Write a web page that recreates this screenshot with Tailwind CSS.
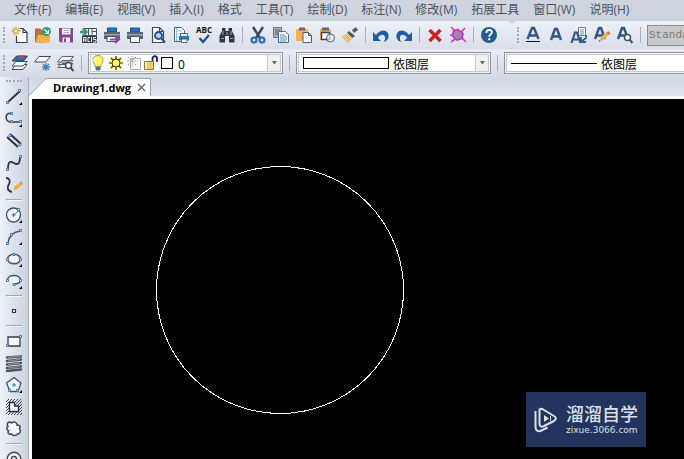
<!DOCTYPE html>
<html lang="zh-CN">
<head>
<meta charset="utf-8">
<meta name="viewport" content="width=device-width, initial-scale=1">
<title>Drawing1.dwg</title>
<script src="https://cdn.jsdelivr.net/npm/@tailwindcss/browser@4"></script>
</head>
<body class="flex h-screen flex-col overflow-hidden bg-[#d3d9e5] text-xs text-black font-['Open_Sans','Noto_Sans_CJK_SC',sans-serif]">

<!-- Menu bar -->
<nav aria-label="菜单" class="flex shrink-0 gap-3.5 overflow-hidden whitespace-nowrap bg-[#cfd4df] px-3.5 pt-0.5 pb-[3px] leading-4 text-[#4b505c]">
  <button>文件(F)</button><button>编辑(E)</button><button>视图(V)</button><button>插入(I)</button><button>格式</button><button>工具(T)</button><button>绘制(D)</button><button>标注(N)</button><button>修改(M)</button><button>拓展工具</button><button>窗口(W)</button><button>说明(H)</button>
</nav>

<!-- Standard toolbar -->
<div class="flex h-7 shrink-0 overflow-hidden bg-[#d3d9e4]">
  <div role="toolbar" aria-label="标准" class="flex w-[512px] shrink-0 items-center gap-[5px] rounded-r-md bg-linear-to-b from-[#eef1f7] to-[#d9deea] pl-[3px]">
    <span class="mr-px h-4 w-0 border-l-2 border-dotted border-[#a3a8b3]"></span>
    <button aria-label="新建"><svg class="size-[18px]" viewBox="0 0 18 18"><path d="M5 7v10h11V6l-3.500-3.500H8" fill="#fff"/><path d="M5.500 10v6.500h10.500V6.500l-4-4H9M12 2.500v4h4" fill="none" stroke="#333b4c" stroke-width="1.200"/><path d="M5 0.500v9M0.500 5h9M2 2l6 6M8 2L2 8" stroke="#d9a04a" stroke-width="1.300"/><circle cx="5" cy="5" r="1.500" fill="#fff3c8"/></svg></button>
    <button aria-label="打开"><svg class="size-[18px]" viewBox="0 0 18 18"><path d="M1.500 3h5l1 2h5v11h-11z" fill="#b9783a" stroke="#a5672c"/><path d="M1.500 16.500L4 9h12v7.500z" fill="#f7b04a"/><circle cx="12.500" cy="5.500" r="4.500" fill="#31a068"/><path d="M10.500 3.500l4 4M14.500 4v3.500H11" stroke="#fff" stroke-width="1.200" fill="none"/></svg></button>
    <button aria-label="保存"><svg class="size-[18px]" viewBox="0 0 18 18"><path d="M2 2h14v14.500H3.500L2 15z" fill="#80488f"/><path d="M5 2.500h8.500v6H5zM5.500 11.500h7.500v5H5.500z" fill="#f7f3fa"/><path d="M6.500 4.500h5.500M6.500 6.500h5.500" stroke="#bca5c8"/><path d="M7 12.500h2v3.500H7z" fill="#80488f"/></svg></button>
    <button aria-label="ACIS 输入"><svg class="size-[18px]" viewBox="0 0 18 18"><path d="M3 2.500h13.500v7H3zM8.500 2.500v7M12 5.500h5M12 2.500v7" fill="#f8fafb" stroke="#4a515c"/><path d="M0 6h6M4 3l3 3-3 3" fill="none" stroke="#35976b" stroke-width="1.800"/><path d="M2 10h15v7H2z" fill="#343b46"/><path d="M3.500 16v-4.500h2.500V16M3.500 14h2.500M10 11.500H8v4h2M11.500 11v5M16 11.500h-2.500v2H16v2.500h-3" fill="none" stroke="#fff" stroke-width=".9"/></svg></button>
    <button aria-label="发布"><svg class="size-[18px]" viewBox="0 0 18 18"><path d="M4.500 2h9v4h-9z" fill="#2677b9" stroke="#214e7c"/><path d="M1 6h16v7H1z" fill="#596675"/><path d="M1 8h16v1.500H1z" fill="#92a3b5"/><path d="M4 10.500h9v5H4z" fill="#fff" stroke="#465060"/><path d="M7 13.500h8M12 10l4 3.500-4 3.500" fill="none" stroke="#9544a9" stroke-width="2"/></svg></button>
    <button aria-label="打印"><svg class="size-[18px]" viewBox="0 0 18 18"><path d="M4.500 2h9v4h-9z" fill="#2677b9" stroke="#214e7c"/><path d="M1 6h16v7H1z" fill="#596675"/><path d="M1 8h16v1.500H1z" fill="#92a3b5"/><path d="M4.500 10.500h9v6h-9z" fill="#fff" stroke="#465060"/></svg></button>
    <button aria-label="打印预览"><svg class="size-[18px]" viewBox="0 0 18 18"><path d="M3.500 1.500h7l4 4v11h-11zM10.500 1.500v4h4" fill="#fff" stroke="#424b5d" stroke-width="1.200"/><circle cx="9.500" cy="9.500" r="3.500" fill="#b5d1ed" stroke="#1c4a8d" stroke-width="1.800"/><path d="M12 12l4 4.500" stroke="#1c4a8d" stroke-width="2"/></svg></button>
    <button aria-label="页面设置"><svg class="size-[18px]" viewBox="0 0 18 18"><path d="M2.500 1.500h7l3 3v11h-10z" fill="#fff" stroke="#4c6077"/><path d="M4.500 2v13M5 5h5M5 8h3M5 11h3" stroke="#8fc3dd"/><path d="M8.500 7.500h7v3h-7z" fill="#fff" stroke="#51647a"/><path d="M7 10h10v4.500H7z" fill="#2677b9"/><path d="M9.500 13h5.500v3.500H9.500z" fill="#fff" stroke="#51647a"/></svg></button>
    <button aria-label="拼写检查"><svg class="size-[18px] overflow-visible" viewBox="0 0 18 18"><text x="9" y="7" font-size="8" font-weight="700" text-anchor="middle" fill="#111">ABC</text><path d="M4.500 12l3.500 4 6-7" fill="none" stroke="#204b99" stroke-width="2.300"/></svg></button>
    <button aria-label="查找"><svg class="size-[18px]" viewBox="0 0 18 18"><path d="M4 2h3.500v3h3V2H14v3l2.500 5v6.500H11V10H7v6.500H1.500V10L4 5z" fill="#303640"/><path d="M5 5v4M13 5v4M3 12.500h3M12 12.500h3M9 6v3" stroke="#a0a8b2"/></svg></button>
    <span class="mx-px h-4 w-px bg-[#a9aeba]"></span>
    <button aria-label="剪切"><svg class="size-[18px]" viewBox="0 0 18 18"><path d="M4 1l7 11M14 1L7 12" stroke="#3d4756" stroke-width="2.400"/><circle cx="5" cy="14" r="2.500" fill="none" stroke="#236ab0" stroke-width="2"/><circle cx="13" cy="14" r="2.500" fill="none" stroke="#236ab0" stroke-width="2"/></svg></button>
    <button aria-label="复制"><svg class="size-[18px]" viewBox="0 0 18 18"><path d="M1.500 1.500h8v10h-8z" fill="#aab3bd" stroke="#697482"/><path d="M3 4h5M3 6h5M3 8h5" stroke="#55606d"/><path d="M6.500 5.500h7l3 3v8h-10z" fill="#fff" stroke="#4b6783"/><path d="M8 9h5M8 11h7M8 13h7M8 15h6" stroke="#4d88b5"/></svg></button>
    <button aria-label="粘贴"><svg class="size-[18px]" viewBox="0 0 18 18"><path d="M1 3h12v12H1z" fill="#f2b253"/><path d="M4 1.500h6v3H4z" fill="#626b78"/><path d="M8 6.500h5.500l3 3v7H8zM13.500 6.500v3h3" fill="#fff" stroke="#525b68"/></svg></button>
    <button aria-label="选择性粘贴"><svg class="size-[18px]" viewBox="0 0 18 18"><path d="M2 3h11v11H2z" fill="#f2b253"/><path d="M4 1.500h7v3H4z" fill="#626b78"/><path d="M3.500 6.500h8v7h-8z" fill="#fff" stroke="#384452" stroke-width="1.400"/><circle cx="12.500" cy="12" r="4" fill="#ddecf7" fill-opacity=".7" stroke="#456582"/></svg></button>
    <button aria-label="特性匹配"><svg class="size-[18px]" viewBox="0 0 18 18"><path d="M12 5.500l4-3" stroke="#545d69" stroke-width="3.500"/><path d="M8 5l6 5-2.500 2L6 7z" fill="#4d5866"/><path d="M6 7l5.500 5L7 17l-6-6z" fill="#eab467"/><path d="M3 10l5 5M5 8l5 5" stroke="#f8d9a6"/></svg></button>
    <span class="mx-px h-4 w-px bg-[#a9aeba]"></span>
    <button aria-label="放弃"><svg class="size-[18px]" viewBox="0 0 18 18"><path d="M1 6v9h8l-3-3c1-3 6-5 7-1 .5 2-.5 4-1.500 5 4-1 5.500-4 5-7C15.500 3 8 3 4 9z" fill="#1f5ca5"/></svg></button>
    <button aria-label="重做"><svg class="size-[18px]" viewBox="0 0 18 18"><path d="M17 6v9H9l3-3c-1-3-6-5-7-1-.5 2 .5 4 1.500 5-4-1-5.500-4-5-7C2.500 3 10 3 14 9z" fill="#1f5ca5"/></svg></button>
    <span class="mx-px h-4 w-px bg-[#a9aeba]"></span>
    <button aria-label="删除"><svg class="size-[18px]" viewBox="0 0 18 18"><path d="M3.500 4l11 11M14.500 4l-11 11" stroke="#c6231b" stroke-width="3.500"/></svg></button>
    <button aria-label="分解"><svg class="size-[18px]" viewBox="0 0 18 18"><path d="M2 1l4 4M16 2l-4 4M2 16l4-3M13 12l4 4M1 9h2" stroke="#bf3cc8" stroke-width="1.600"/><path d="M9 3.500l5 4-1 5-5 1.500-4.500-4 1-5z" fill="#a883ac" stroke="#c02fc8" stroke-width="1.600"/></svg></button>
    <span class="mx-px h-4 w-px bg-[#a9aeba]"></span>
    <button aria-label="帮助"><svg class="size-[18px]" viewBox="0 0 18 18"><circle cx="9" cy="9" r="8" fill="#235e91"/><path d="M6.300 7c0-4 5.600-3.800 5.600-.8 0 2-2.700 2-2.700 4.600" fill="none" stroke="#fff" stroke-width="1.900"/><path d="M8.200 12.200h2v2h-2z" fill="#fff"/></svg></button>
  </div>
  <div role="toolbar" aria-label="文字" class="flex min-w-0 flex-1 items-center gap-[5px] rounded-l-md bg-linear-to-b from-[#eef1f7] to-[#d9deea] pl-[5px]">
    <span class="h-4 w-0 shrink-0 border-l-2 border-dotted border-[#a3a8b3]"></span>
    <button class="shrink-0" aria-label="多行文字"><svg class="size-[18px] overflow-visible" viewBox="0 0 18 18"><path d="M3.500 13L8 2h2l4.500 11M5.500 9.500h7" fill="none" stroke="#315684" stroke-width="2.400"/><path d="M2 15.500h14" stroke="#111"/></svg></button>
    <button class="shrink-0" aria-label="单行文字"><svg class="size-[18px] overflow-visible" viewBox="0 0 18 18"><path d="M4 14L8 3h2l4 11M5.500 10.500h7" fill="none" stroke="#315684" stroke-width="2.400"/></svg></button>
    <button class="shrink-0" aria-label="文字样式"><svg class="size-[18px] overflow-visible" viewBox="0 0 18 18"><path d="M8.500 1.500h7v8h-7z" fill="#fff" stroke="#737b86"/><path d="M10 4h4M10 6h4M10 8h4" stroke="#7d8791"/><path d="M1.500 17L5 6.500h2L10.500 17M3 13.500h6" fill="none" stroke="#315684" stroke-width="2.200"/><path d="M16 9v3l-4 3M11 11v5h5" stroke="#2e6392" stroke-width="1.800" fill="none"/></svg></button>
    <button class="shrink-0" aria-label="编辑文字"><svg class="size-[18px] overflow-visible" viewBox="0 0 18 18"><path d="M2 13L6 2h2l4 11M3.500 9.500h7" fill="none" stroke="#315684" stroke-width="2.400"/><path d="M6.500 15l1.500-4 6-5.500 2.500 2.500-6 6z" fill="#efb052"/><path d="M13.500 7l2-2 2 2.500-1.500 1.500z" fill="#dc7656"/><path d="M5.500 16l1-2 1 1z" fill="#444"/></svg></button>
    <button class="shrink-0" aria-label="查找文字"><svg class="size-[18px] overflow-visible" viewBox="0 0 18 18"><path d="M2 13L6 2h2l4 11M3.500 9.500h7" fill="none" stroke="#315684" stroke-width="2.400"/><circle cx="11.500" cy="11.500" r="3" fill="#fff" stroke="#4a525f" stroke-width="1.500"/><path d="M13.500 13.500l3 3.500" stroke="#4a525f" stroke-width="2"/></svg></button>
    <span class="mx-px h-4 w-px shrink-0 bg-[#a9aeba]"></span>
    <select aria-label="文字样式" disabled class="h-[21px] w-40 shrink-0 appearance-none border border-[#888d96] bg-[#c9c9c9] pl-px text-[11px] leading-4 text-[#777] opacity-100 font-['Liberation_Mono','Noto_Sans_CJK_SC',monospace]"><option>Standard</option></select>
  </div>
</div>

<!-- Layer and property toolbar -->
<div role="toolbar" aria-label="图层" class="flex h-7 shrink-0 items-center gap-[5px] overflow-hidden bg-linear-to-b from-[#e9edf4] to-[#d5dae6] pl-[3px]">
  <span class="mr-px h-4 w-0 shrink-0 border-l-2 border-dotted border-[#a3a8b3]"></span>
  <button class="shrink-0" aria-label="图层特性"><svg class="size-[18px]" viewBox="0 0 18 18"><path d="M5 10.500h11l-4 5H1z" fill="#f6f7f9" stroke="#414955"/><path d="M5 7.500h11l-4 4.500H1z" fill="#f6f7f9" stroke="#414955"/><path d="M5.500 2H16.500l-4 5H1z" fill="#2771b2" stroke="#23466f"/><path d="M7 1.500h7l-2 3-4-.5z" fill="#d43b35"/></svg></button>
  <button class="shrink-0" aria-label="冻结图层"><svg class="size-[18px]" viewBox="0 0 18 18"><path d="M5 2.500h11.500l-5 5.500H0.500z" fill="#fafbfc" stroke="#454c57"/><path d="M12 9v8M8 13h8M9 10l6 6M15 10l-6 6" stroke="#4283bd" stroke-width="1.300"/></svg></button>
  <button class="shrink-0" aria-label="图层查询"><svg class="size-[18px]" viewBox="0 0 18 18"><path d="M5 9.500h11l-4 4H1zM5 6.500h11l-4 4H1zM5 2.500h11.500l-5 5.500H0.500z" fill="#f6f7f9" stroke="#5c636d"/><circle cx="11.500" cy="11.500" r="3" fill="#fff" stroke="#454c57" stroke-width="1.500"/><path d="M13.500 13.500l3 3.500" stroke="#454c57" stroke-width="2"/></svg></button>
  <span class="mx-px h-4 w-px shrink-0 bg-[#a9aeba]"></span>

  <div class="relative h-[22px] w-[195px] shrink-0 border border-[#90959e] bg-[#f2f3f5] p-px">
    <select aria-label="图层" class="h-full w-full appearance-none border border-[#c7c9ce] bg-white pt-0.5 pl-[87px] text-xs leading-4"><option>0</option></select>
    <div class="pointer-events-none absolute inset-y-0 left-0 flex items-center">
      <svg class="size-[18px]" viewBox="0 0 18 18"><path d="M9 1.500c-6 0-6 6-3 9v2h6v-2c3-3 3-9-3-9z" fill="#fff36d" stroke="#aa9b35"/><path d="M7 4c-2 1-2 3-1 4" stroke="#fff" fill="none" stroke-width="1.500"/><path d="M6.500 13h5v2.500l-1 1h-3l-1-1z" fill="#477795"/></svg>
      <svg class="size-[18px]" viewBox="0 0 18 18"><path d="M3 3h12v12H3z" fill="#fffaa0"/><path d="M9 2v14M2 9h14M4 4l10 10M14 4L4 14" stroke="#333200" stroke-width="1.200"/><circle cx="9" cy="9" r="4" fill="#fff65a" stroke="#333200"/></svg>
      <svg class="size-[18px]" viewBox="0 0 18 18"><path d="M5.500 4.500h10v11h-10z" fill="#fafafa" stroke="#aaa"/><path d="M7 2v11M2 7h11M3 3l8 8M11 3l-8 8" stroke="#999" stroke-dasharray="1.500 1"/></svg>
      <svg class="size-[18px]" viewBox="0 0 18 18"><path d="M9.500 8V4.500c0-3 4.500-3 4.500 0V8" fill="none" stroke="#24245a" stroke-width="1.800"/><path d="M1.500 7.500h9v8h-9z" fill="#eac96b" stroke="#8e7637"/><path d="M3 8v7" stroke="#fff1bb" stroke-width="2"/></svg>
      <span class="size-3 border border-black bg-white"></span>
    </div>
    <span class="pointer-events-none absolute inset-y-px right-px flex w-[14px] items-center justify-center border border-[#c7c9ce] bg-[#f1f1f1]"><svg class="h-1 w-[5px]" viewBox="0 0 5 4"><path d="M0 0h5L2.500 3.500z" fill="#626262"/></svg></span>
  </div>
  <span class="mx-px h-4 w-px shrink-0 bg-[#a9aeba]"></span>
  <div class="relative h-[22px] w-[195px] shrink-0 border border-[#90959e] bg-[#f2f3f5] p-px">
    <select aria-label="颜色" class="h-full w-full appearance-none border border-[#c7c9ce] bg-white pt-0.5 pl-[94px] text-xs leading-4"><option>依图层</option></select>
    <span class="pointer-events-none absolute inset-y-1 left-1.5 w-[86px] border border-black"></span>
    <span class="pointer-events-none absolute inset-y-px right-px flex w-[14px] items-center justify-center border border-[#c7c9ce] bg-[#f1f1f1]"><svg class="h-1 w-[5px]" viewBox="0 0 5 4"><path d="M0 0h5L2.500 3.500z" fill="#626262"/></svg></span>
  </div>
  <span class="mx-px h-4 w-px shrink-0 bg-[#a9aeba]"></span>
  <div class="relative h-[22px] w-[195px] shrink-0 border border-[#90959e] bg-[#f2f3f5] p-px">
    <select aria-label="线型" class="h-full w-full appearance-none border border-[#c7c9ce] bg-white pt-0.5 pl-[94px] text-xs leading-4"><option>依图层</option></select>
    <span class="pointer-events-none absolute top-2.5 left-1.5 h-px w-[86px] bg-black"></span>
  </div>
</div>

<div class="flex min-h-0 flex-1">
  <!-- Drawing tools -->
  <aside role="toolbar" aria-label="绘制" class="flex w-[29px] shrink-0 flex-col items-center gap-1 overflow-hidden border-r border-[#a9afbc] bg-linear-to-r from-[#edf1f7] to-[#ccd3e0] pt-[3px]">
    <span class="mb-0.5 h-0 w-4 shrink-0 border-t-2 border-dotted border-[#a3a8b3]"></span>
    <button class="shrink-0" aria-label="直线"><svg class="size-[18px]" viewBox="0 0 18 18"><path d="M3 14L15 3" stroke="#29303e" stroke-width="1.800"/><path d="M1.500 13.500h2v2h-2zM13.500 1.500h2v2h-2z" fill="#fff" stroke="#3b74a8"/><path d="M17 14v3h-3z"/></svg></button>
    <button class="shrink-0" aria-label="多段线"><svg class="size-[18px]" viewBox="0 0 18 18"><path d="M6 3C-1 3 0 12 6 12h9" fill="none" stroke="#39414f" stroke-width="1.600"/><path d="M5.500 2.500h2v2h-2zM5.500 10.500h2v2h-2zM14.500 10.500h2v2h-2z" fill="#fff" stroke="#3b74a8"/><path d="M17 14v3h-3z"/></svg></button>
    <button class="shrink-0" aria-label="多线"><svg class="size-[18px]" viewBox="0 0 18 18"><path d="M5 2l11 10M2 5l11 10" stroke="#29303e" stroke-width="2"/><path d="M4 2.500h2v2H4zM14 11.500h2v2h-2z" fill="#fff" stroke="#3b74a8"/></svg></button>
    <button class="shrink-0" aria-label="样条曲线"><svg class="size-[18px]" viewBox="0 0 18 18"><path d="M3 15C3 5 7 8 9 9c5 3 6-1 6-6" fill="none" stroke="#29303e" stroke-width="1.800"/><path d="M1.500 14.500h2v2h-2zM14.500 1.500h2v2h-2z" fill="#fff" stroke="#3b74a8"/></svg></button>
    <button class="shrink-0" aria-label="徒手画"><svg class="size-[18px]" viewBox="0 0 18 18"><path d="M1 2c3 0 5 3 3 6s-2 7 3 8" fill="none" stroke="#29303e" stroke-width="1.800"/><path d="M8 15l1-4 5-4 2 3-5 4z" fill="#f0ac42"/><path d="M14 6.500l2-1.500 2 3-2 1.500z" fill="#df9a56"/><path d="M6.500 16l2-4 2 2.500z" fill="#d8dbe0"/></svg></button>
    <span class="my-px h-0.5 w-4 shrink-0 border-t border-b border-t-[#a0a7b4] border-b-[#f3f5f9]"></span>
    <button class="shrink-0" aria-label="圆"><svg class="size-[18px]" viewBox="0 0 18 18"><circle cx="8.500" cy="9" r="7" fill="#eef4f9" stroke="#445063" stroke-width="1.300"/><path d="M6.500 9h4M8.500 7v4M9 9l5-5" stroke="#3b74a8"/><path d="M12.500 2.500h2v2h-2z" fill="#fff" stroke="#3b74a8"/><path d="M17 14v3h-3z"/></svg></button>
    <button class="shrink-0" aria-label="圆弧"><svg class="size-[18px]" viewBox="0 0 18 18"><path d="M3 15C4 7 8 4 15 3" fill="none" stroke="#445063" stroke-width="1.500"/><path d="M1.500 14.500h2v2h-2zM5.500 5.500h2v2h-2zM14.500 1.500h2v2h-2z" fill="#fff" stroke="#3b74a8"/><path d="M17 14v3h-3z"/></svg></button>
    <button class="shrink-0" aria-label="椭圆"><svg class="size-[18px]" viewBox="0 0 18 18"><ellipse cx="9" cy="9" rx="6.500" ry="4.800" fill="#eef4f9" stroke="#445063" stroke-width="1.400"/><path d="M1.500 8.500h2v2h-2zM8 3.500h2v2H8zM14.500 8.500h2v2h-2z" fill="#fff" stroke="#3b74a8"/><path d="M17 14v3h-3z"/></svg></button>
    <button class="shrink-0" aria-label="椭圆弧"><svg class="size-[18px]" viewBox="0 0 18 18"><path d="M2.500 8c0-6 13-6 13 0 0 3-3 4-7 4" fill="#eef4f9" stroke="#445063" stroke-width="1.400"/><path d="M1.500 7.500h2v2h-2zM8 11.500h2v2H8zM14.500 7.500h2v2h-2z" fill="#fff" stroke="#3b74a8"/><path d="M17 14v3h-3z"/></svg></button>
    <span class="my-px h-0.5 w-4 shrink-0 border-t border-b border-t-[#a0a7b4] border-b-[#f3f5f9]"></span>
    <button class="shrink-0" aria-label="点"><svg class="size-[18px]" viewBox="0 0 18 18"><path d="M7.500 7.500h3v3h-3z" fill="#fff" stroke="#29303e" stroke-width="1.200"/></svg></button>
    <span class="my-px h-0.5 w-4 shrink-0 border-t border-b border-t-[#a0a7b4] border-b-[#f3f5f9]"></span>
    <button class="shrink-0" aria-label="矩形"><svg class="size-[18px]" viewBox="0 0 18 18"><path d="M3 5h12v9H3z" fill="#f6f8fa" stroke="#333c49" stroke-width="1.300"/><path d="M1.500 12.500h2v2h-2zM14.500 3.500h2v2h-2z" fill="#fff" stroke="#3b74a8"/></svg></button>
    <button class="shrink-0" aria-label="螺旋"><svg class="size-[18px]" viewBox="0 0 18 18"><path d="M2 3.500l14-1M2 7l14-1.500M2 10.500L16 9M2 14l14-1.500M2 17l14-1.500" stroke="#4d535c" stroke-width="2.400" stroke-linecap="round"/><path d="M3 3.500l12-1M3 7l12-1.500M3 10.500L15 9M3 14l12-1.500" stroke="#a2a7ad" stroke-width=".8"/></svg></button>
    <button class="shrink-0" aria-label="多边形"><svg class="size-[18px]" viewBox="0 0 18 18"><path d="M9 1.500l7 5.500-3 8.500H5L1.500 7z" fill="#eef4f9" stroke="#445063" stroke-width="1.300"/><path d="M7 9h4M9 7v4" stroke="#3b74a8"/><path d="M3.500 13.500h2v2h-2zM11.500 13.500h2v2h-2z" fill="#fff" stroke="#3b74a8"/><path d="M17 14v3h-3z"/></svg></button>
    <button class="shrink-0" aria-label="面域"><svg class="size-[18px]" viewBox="0 0 18 18"><path d="M1 4l3-3M1 7l6-6M1 10l9-9M1 13L13 1M1 16L16 1M3 17L17 3M6 17L17 6M9 17l8-8M12 17l5-5M15 17l2-2" stroke="#2b323d" stroke-width=".9"/><path d="M4.500 4.500h5v3.500h4v5.500h-9z" fill="#fff" stroke="#29303e" stroke-width="1.400"/></svg></button>
    <button class="shrink-0" aria-label="修订云线"><svg class="size-[18px]" viewBox="0 0 18 18"><path d="M3 6.500C1 3 4 1 6.500 3 8.500 1 12 2 12 5c3-.5 4 2 2.500 4 2 2 .5 5-2 5-1.500 2-5 2-6 0C4 15 2 13 3.500 10.500 1.500 10 1 7.500 3 6.500z" fill="#f4f6f9" stroke="#3e4756" stroke-width="1.500"/></svg></button>
    <span class="my-px h-0.5 w-4 shrink-0 border-t border-b border-t-[#a0a7b4] border-b-[#f3f5f9]"></span>
    <button class="shrink-0" aria-label="圆环"><svg class="size-[18px]" viewBox="0 0 18 18"><circle cx="9" cy="9" r="6.800" fill="#f2f5f8" stroke="#3e4756" stroke-width="1.400"/><circle cx="9" cy="9" r="2.500" fill="#fff" stroke="#3e4756" stroke-width="1.400"/></svg></button>
  </aside>

  <main class="flex min-w-0 flex-1 flex-col">
    <!-- Document tabs -->
    <div role="tablist" class="flex h-[19px] shrink-0 items-end bg-linear-to-b from-[#d2d8e4] to-[#e0e5ee]">
      <svg class="h-[19px] w-[19px] shrink-0" viewBox="0 0 19 19"><path d="M0 19L16 2.500q2-1 3-1V19z" fill="#fff"/><path d="M0 18.500L16 2.500q2-1 3-1" fill="none" stroke="#9aa0ac"/></svg>
      <div class="flex h-[18px] items-center gap-1.5 border-t border-r border-[#9aa0ac] bg-white pr-1 pl-[5px]">
        <button role="tab" aria-selected="true" class="text-[11px] leading-4 font-bold">Drawing1.dwg</button>
        <button aria-label="关闭"><svg class="size-[9px]" viewBox="0 0 9 9"><path d="M1 1l7 7M8 1L1 8" stroke="#5b5f67" stroke-width="1.200"/></svg></button>
      </div>
    </div>
    <!-- Model space -->
    <div class="relative min-h-0 flex-1 overflow-hidden border-t-[3px] border-l-[3px] border-[#fafbfd] bg-black">
      <svg class="h-full w-full" aria-label="圆"><circle cx="248" cy="191" r="123.500" fill="none" stroke="#fff" shape-rendering="crispEdges"/></svg>
      <div class="absolute right-[38px] bottom-3 flex h-[55px] w-[120px] items-center gap-2 bg-[#22335d] pl-2 text-[#dbe0e9]">
        <svg class="h-[26px] w-6 shrink-0" viewBox="0 0 24 26"><path d="M5.500 3.500v13c0 3 2 4 4.500 2.500l10-5c2.500-1.500 2.500-3.500 0-5L10 3C8 1.500 5.500 1 5.500 3.500z" fill="none" stroke="currentColor" stroke-width="2"/><path d="M1.500 4v16c0 4 3 5 6 3.500l6-3" fill="none" stroke="currentColor" stroke-width="2"/><path d="M10 8v7l5-3.500z" fill="currentColor"/><path d="M16.500 9v5" stroke="currentColor"/></svg>
        <div class="whitespace-nowrap">
          <div class="text-lg leading-5 font-medium">溜溜自学</div>
          <div class="text-[9px] leading-3 font-['DejaVu_Sans',sans-serif]">zixue.3066.com</div>
        </div>
      </div>
    </div>
  </main>
</div>
</body>
</html>
